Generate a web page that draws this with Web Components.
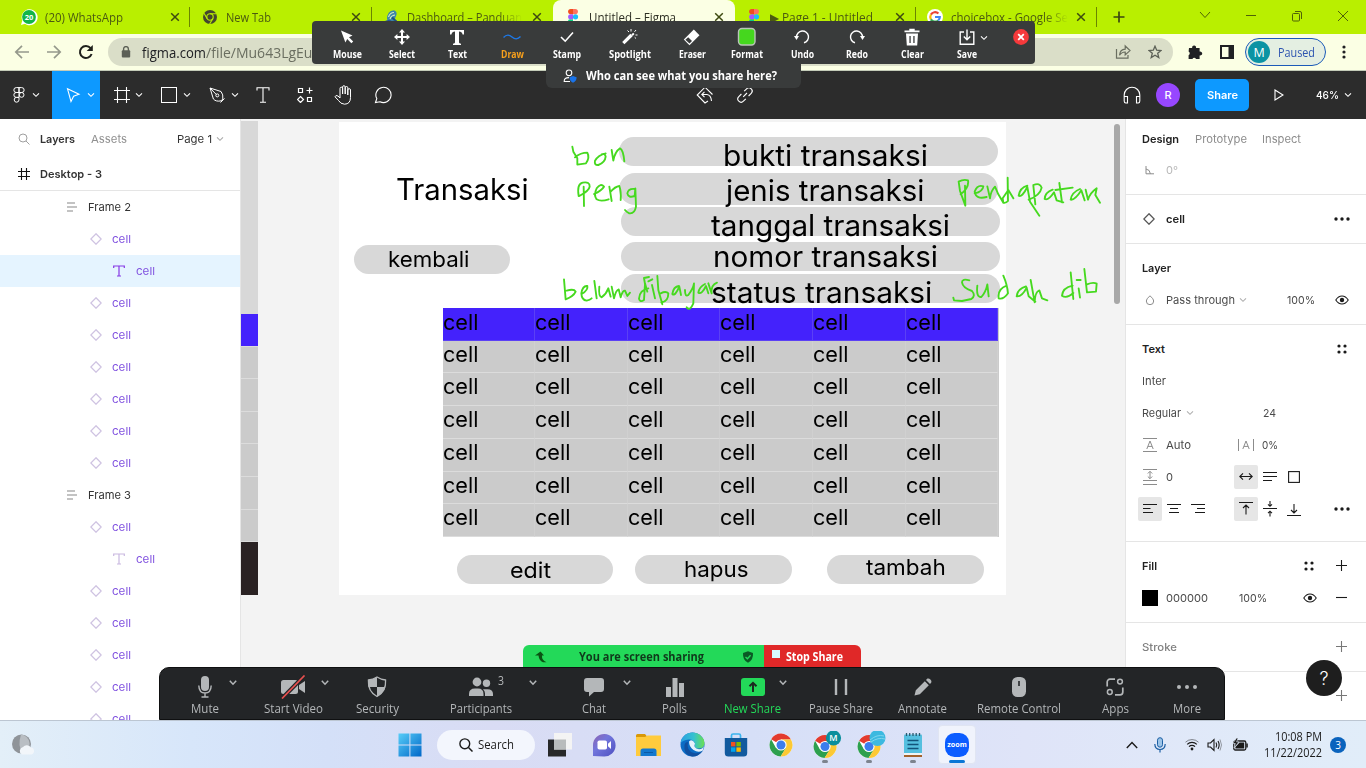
<!DOCTYPE html>
<html lang="en"><head><meta charset="utf-8"><title>Untitled – Figma</title>
<style>html,body{margin:0;width:1366px;height:768px;overflow:hidden;background:#fff}</style></head>
<body><desktop-screen></desktop-screen>
<script>
// ---------- icon set: name -> [width, height, markup] ----------
const L='fill="none" stroke="currentColor"';
const chrome=`<circle cx="12" cy="12" r="11.5" fill="#fff"/><path d="M12 12 2.1 6.2A11.5 11.5 0 0 1 22 6.4H12Z" fill="#e33b2e"/><path d="M2.1 6.2A11.5 11.5 0 0 0 11.6 23.5L17 15 12 12 7 15Z" fill="#2da04e"/><path d="M22 6.4A11.5 11.5 0 0 1 11.6 23.5L17 14.8 12 6.4Z" fill="#fcc934"/><circle cx="12" cy="12" r="5.6" fill="#fff"/><circle cx="12" cy="12" r="4.5" fill="#3b7ded"/>`;
const ICONS={
 wa:[18,18,'<path d="M1 17l1.3-4.5A8 8 0 1 1 5 15.8Z" fill="#fff"/><circle cx="9" cy="9" r="6.9" fill="#12b548"/><text x="9" y="11.7" font-size="7.5" font-weight="700" fill="#fff" text-anchor="middle" font-family="Open Sans,sans-serif">20</text>'],
 chromeg:[14,14,'<circle cx="7" cy="7" r="7" fill="#44452f"/><circle cx="7" cy="7" r="3.2" fill="none" stroke="#b9ef00" stroke-width="1.1"/><path d="M7 3.8H13.5M4.2 8.6 1 3.2M9.8 8.6 6.6 14" stroke="#b9ef00" stroke-width="1.1"/>'],
 book:[14,16,'<path d="M3 10Q3 2 10 1.2 14 3 12 7L10 12H4Z" fill="#3c86a8"/><path d="M4.5 8Q6 3.5 10 3.5M6 10Q7 6.5 11 6" stroke="#d4ecc0" stroke-width="1.2" fill="none"/><path d="M8 8.5 12.5 12.5" stroke="#1f4f86" stroke-width="1.8"/><path d="M1 12Q6 10 8 12.5 10 11 13.5 12.5V15Q9 14 7.5 15 5 13.8 1 14.5Z" fill="#24549a"/>'],
 fig:[12,16,'<g transform="translate(1)"><path d="M5 0H2.7a2.6 2.6 0 0 0 0 5.2H5Z" fill="#f24e1e"/><path d="M5 0h2.3a2.6 2.6 0 0 1 0 5.2H5Z" fill="#ff7262"/><path d="M5 5.2H2.7a2.6 2.6 0 0 0 0 5.2H5Z" fill="#a259ff"/><circle cx="7.5" cy="7.8" r="2.6" fill="#1abcfe"/><path d="M5 10.4H2.7A2.6 2.6 0 1 0 5 13Z" fill="#0acf83"/></g>'],
 goog:[16,16,'<circle cx="8" cy="8" r="8" fill="#fff"/><g fill="none" stroke-width="2.2"><path d="M3.9 5.6A4.8 4.8 0 0 1 11.4 4.5" stroke="#ea4335"/><path d="M3.9 5.6A4.8 4.8 0 0 0 3.9 10.4" stroke="#fbbc05"/><path d="M3.9 10.4A4.8 4.8 0 0 0 11.2 11.5" stroke="#34a853"/><path d="M8 8H12.8A4.8 4.8 0 0 1 11.2 11.5" stroke="#4285f4"/></g>'],
 x:[10,10,`<path d="M1.2 1.2 8.8 8.8M8.8 1.2 1.2 8.8" ${L} stroke-width="1.5"/>`],
 plus:[12,12,`<path d="M6 .5V11.5M.5 6H11.5" ${L} stroke-width="1.7"/>`],
 wchev:[12,12,`<path d="M1 1 6 6.5 11 1" ${L}/>`], wmin:[12,12,`<path d="M1 4.5H11" ${L}/>`],
 wmax:[12,12,`<rect x="1.5" y="2.5" width="7" height="7.5" rx="1" ${L}/><path d="M4 .5H9A1.5 1.5 0 0 1 10.5 2V8" ${L}/>`],
 wx:[12,12,`<path d="M1 0 11 10M11 0 1 10" ${L}/>`],
 back:[16,16,`<path d="M15 8H2M8 1.8 1.8 8 8 14.2" ${L} stroke-width="1.7"/>`],
 fwd:[16,16,`<path d="M1 8H14M8 1.8 14.2 8 8 14.2" ${L} stroke-width="1.7"/>`],
 reload:[16,16,`<path d="M13.6 10A6 6 0 1 1 12.6 4.2" ${L} stroke-width="2"/><path d="M14.8.9V7H8.7Z" fill="currentColor"/>`],
 lock:[10,12,`<rect x=".8" y="4.3" width="8.4" height="7.2" rx="1" fill="currentColor"/><path d="M2.6 5V3A2.4 2.4 0 0 1 7.4 3V5" ${L} stroke-width="1.4"/>`],
 share:[16,16,`<path d="M1.5 5V14.2H13V11" ${L} stroke-width="1.2"/><path d="M4.5 11.3Q5 5.4 10.2 5.2V2L15 6.6 10.2 11V8Q6.5 8 4.5 11.3Z" ${L} stroke-width="1.2"/>`],
 star:[14,14,`<path d="M7 1.2 8.7 5.2 13 5.5 9.7 8.3 10.8 12.6 7 10.3 3.2 12.6 4.3 8.3 1 5.5 5.3 5.2Z" ${L} stroke-width="1.3"/>`],
 puzzle:[16,16,'<path d="M2 4H5.2A2 2 0 1 1 9 4H12.6V7.6A2 2 0 1 1 12.6 11.4V15H9A2 2 0 0 0 5.4 15H1.6V11.2A2 2 0 0 0 1.6 7.6Z" fill="currentColor"/>'],
 side:[14,14,'<path d="M0 0H14V14H0ZM2 2V12H8.5V2Z" fill="currentColor" fill-rule="evenodd"/>'],
 vdots:[4,14,'<g fill="currentColor"><circle cx="2" cy="2" r="1.6"/><circle cx="2" cy="7" r="1.6"/><circle cx="2" cy="12" r="1.6"/></g>'],
 // Figma toolbar
 chev:[8,6,`<path d="M1 1.3 4 4.3 7 1.3" ${L} stroke-width="1.1"/>`],
 flogo:[12,16,`<path d="M6 .6H3.3a2.4 2.4 0 0 0 0 4.9H6ZM6 .6H8.7a2.4 2.4 0 0 1 0 4.9H6ZM6 5.5H3.3a2.4 2.4 0 0 0 0 4.9H6Z M6 10.4H3.3A2.4 2.4 0 1 0 6 12.8Z" ${L}/><circle cx="8.6" cy="7.9" r="2.4" ${L}/>`],
 move:[16,16,`<path d="M2.5 1.8 14 7.2 8.6 9.2 6 14.5Z" ${L} stroke-width="1.1"/>`],
 frame:[16,16,`<path d="M3.5 0V16M12.5 0V16M0 3.5H16M0 12.5H16" ${L} stroke-width="1.1"/>`],
 rect:[16,16,`<rect x=".5" y=".5" width="15" height="15" ${L}/>`],
 pen:[16,16,`<path d="M1 1 12 4.5Q14.5 7.5 13.8 12L12.2 13.8Q7 15 4.4 12ZM1 1 7.4 7.6M11.5 15.5 15.5 11.5" ${L}/><circle cx="8.3" cy="8.4" r="1.5" ${L}/>`],
 text:[14,16,`<path d="M1 3.5V.7H13V3.5M7 .7V15.3M4 15.3H10" ${L} stroke-width="1.1"/>`],
 res:[16,16,`<path d="M1.5 1.5h4v4h-4ZM10.5 10.5h4v4h-4ZM3.5 9.5 6.5 12.5 3.5 15.5.5 12.5ZM12.5.5V6.5M9.5 3.5H15.5" ${L} stroke-width="1.2"/>`],
 hand:[18,20,`<path d="M6 12V3.5a1.2 1.2 0 0 1 2.6 0V9 2a1.2 1.2 0 0 1 2.6 0V9 2.8a1.2 1.2 0 0 1 2.6 0V10 5a1.2 1.2 0 0 1 2.7 0V12.5Q16.5 19 10.5 19.2 6.5 19 4.5 15.5L1 11.8Q1.5 9.6 4 11L6 13Z" ${L}/>`],
 comment:[18,18,`<path d="M1.5 16.5 2.8 12.6A7.6 7.6 0 1 1 6 15.7Z" ${L} stroke-width="1.1"/>`],
 comp:[18,18,`<path d="M12 15 9 17 1.2 9 9 1.2 16.5 8.5M6 8.5H11Q15 9 15.5 15M8.5 5.8 5.8 8.5 8.5 11.2" ${L} stroke-width="1.1"/>`],
 link:[16,16,`<path d="M6.2 9.8 10 6M7.2 4.2 9.6 1.8A3.2 3.2 0 0 1 14.2 6.4L11.6 9M8.8 11.8 6.4 14.2A3.2 3.2 0 0 1 1.8 9.6L4.4 7" ${L} stroke-width="1.1"/>`],
 phones:[18,18,`<path d="M1.2 14V9A7.8 7.8 0 0 1 16.8 9V14M1.2 10.5H4.5V17H2.8Q1.2 17 1.2 15ZM16.8 10.5H13.5V17H15.2Q16.8 17 16.8 15Z" ${L} stroke-width="1.1"/>`],
 play:[10,12,`<path d="M1 1 9 6 1 11Z" ${L} stroke-width="1.1"/>`],
 // panels
 search:[12,12,`<circle cx="5" cy="5" r="4" ${L}/><path d="M8 8 11.5 11.5" ${L}/>`],
 hash:[12,12,`<path d="M3.5 0V12M8.5 0V12M0 3.5H12M0 8.5H12" ${L} stroke-width="1.1"/>`],
 auto:[10,10,`<path d="M0 1H8M0 5H10M0 9H6" ${L} stroke-width="1.7"/>`],
 dia:[12,12,`<path d="M6 .8 11.2 6 6 11.2.8 6Z" ${L} stroke-width="1.3"/>`],
 tt:[12,12,`<path d="M.7 3V1H11.3V3M6 1V11M4 11H8" ${L} stroke-width="1.2"/>`],
 angle:[10,10,`<path d="M1 1V8.8H9M1 4Q5 4.5 5.4 8.8" ${L}/>`],
 dots:[16,4,'<g fill="currentColor"><circle cx="2" cy="2" r="1.7"/><circle cx="8" cy="2" r="1.7"/><circle cx="14" cy="2" r="1.7"/></g>'],
 drop:[10,10,`<path d="M5 .8Q8.7 3.7 8.7 6A3.6 3.6 0 0 1 1.3 6Q1.3 3.7 5 .8Z" ${L}/>`],
 eye:[14,10,`<path d="M.8 5Q3.3 1 7 1 10.7 1 13.2 5 10.7 9 7 9 3.3 9 .8 5Z" ${L} stroke-width="1.1"/><circle cx="7" cy="5" r="2.2" fill="currentColor"/>`],
 four:[10,10,'<g fill="currentColor"><circle cx="2" cy="2" r="1.6"/><circle cx="8" cy="2" r="1.6"/><circle cx="2" cy="8" r="1.6"/><circle cx="8" cy="8" r="1.6"/></g>'],
 add:[12,12,`<path d="M5.5 0V11M0 5.5H11" ${L} stroke-width="1.1"/>`], minus:[12,12,`<path d="M0 5.5H11" ${L} stroke-width="1.1"/>`],
 lh:[14,14,`<path d="M0 .5H14M0 13.5H14M3.8 11 7 3 10.2 11M5 8.4H9" ${L}/>`],
 ls:[16,14,`<path d="M.5 1V13M15.5 1V13M4.8 11 8 3 11.2 11M6 8.4H10" ${L}/>`],
 ps:[14,16,`<path d="M0 .5H14M0 11.5H14M0 15.5H14M7 2.5V9.5M4.8 4.5 7 2.3 9.2 4.5M4.8 7.5 7 9.7 9.2 7.5" ${L}/>`],
 aw:[14,10,`<path d="M1 4.5H13M4 1.3.8 4.5 4 7.7M10 1.3 13.2 4.5 10 7.7" ${L} stroke-width="1.1"/>`],
 ah:[14,10,`<path d="M0 .5H14M0 4.5H14M0 8.5H9" ${L} stroke-width="1.1"/>`],
 fs:[12,12,`<rect x=".6" y=".6" width="10.8" height="10.8" ${L} stroke-width="1.1"/>`],
 al:[14,10,`<path d="M0 .5H14M0 4.5H7.5M0 8.5H10" ${L} stroke-width="1.1"/>`],
 ac:[14,10,`<path d="M0 .5H14M3 4.5H11M2 8.5H12" ${L} stroke-width="1.1"/>`],
 ar:[14,10,`<path d="M0 .5H14M6 4.5H14M4 8.5H14" ${L} stroke-width="1.1"/>`],
 vt:[14,14,`<path d="M0 .5H14M7 3V12.5M4 6 7 3 10 6" ${L} stroke-width="1.1"/>`],
 vm:[14,16,`<path d="M0 7.5H14M7 0V5M5 3.3 7 5.3 9 3.3M7 15.5V11M5 12.2 7 10.2 9 12.2" ${L} stroke-width="1.1"/>`],
 vb:[14,14,`<path d="M0 13.5H14M7 2V11M4 8 7 11 10 8" ${L} stroke-width="1.1"/>`],
 // annotation bar
 mouse:[14,14,'<path d="M1 .5 12.5 5.6 9 7.2 13.2 11.4 11.4 13.2 7.2 9 5.4 12.4Z" fill="currentColor"/>'],
 select:[16,16,'<path d="M8 0 11 3.4H9V7H12.6V5L16 8 12.6 11V9H9V12.6H11L8 16 5 12.6H7V9H3.4V11L0 8 3.4 5V7H7V3.4H5Z" fill="currentColor"/>'],
 bigt:[14,15,'<path d="M0 0H14V4.5H12.6Q12 1.6 9 1.6V12.5Q9 13.6 11 13.8V15H3V13.8Q5 13.6 5 12.5V1.6Q2 1.6 1.4 4.5H0Z" fill="currentColor"/>'],
 draw:[18,8,'<path d="M.5 4.5Q4.5 0 9 4T17.5 3.5" fill="none" stroke="#1e78e6" stroke-width="1.4"/>'],
 stamp:[14,12,`<path d="M1 6 5.2 10.2 13 1.5" ${L} stroke-width="1.6"/>`],
 spot:[16,16,`<path d="M1.3 14.2 9.5 6" ${L} stroke-width="3.2"/><path d="M10.2 4.6 11.6 6" ${L} stroke-width="2.6"/><path d="M9 0V2.5M14 1 12.5 2.8M13.5 6H15.5M5.5 1.5 7 3M14 9.5 12.7 8.3" ${L}/>`],
 eraser:[18,18,'<path d="M.8 11.5 10.8 1.5 16.5 7.2 6.5 17.2Z" fill="currentColor"/><path d="M5.2 9.3 9 13.1 6.5 15.6 2.4 11.8Z" fill="#393b3b"/>'],
 format:[20,20,'<rect x="1.5" y="1.5" width="16.5" height="16.5" rx="3.5" fill="#45d71e" stroke="#b9c4b8" stroke-width="1.4"/>'],
 undo:[16,16,`<path d="M2.5 8A6 6 0 1 1 10 13.8" ${L} stroke-width="1.4"/><path d="M0 7H5L2.5 11Z" fill="currentColor"/>`],
 redo:[16,16,`<path d="M13.5 8A6 6 0 1 0 6 13.8" ${L} stroke-width="1.4"/><path d="M11 7H16L13.5 11Z" fill="currentColor"/>`],
 clear:[16,18,'<path d="M.5 2.5H5.3V.8H10.7V2.5H15.5V4.2H.5ZM2 5.5H14L13.2 17.5H2.8ZM5.4 8V15H6.7V8ZM9.3 8V15H10.6V8Z" fill="currentColor" fill-rule="evenodd"/>'],
 save:[16,16,`<path d="M5 3H1.2V15.2H14.8V3H11M8 .5V10.5M4.8 7.5 8 10.7 11.2 7.5" ${L} stroke-width="1.4"/>`],
 closer:[16,16,'<circle cx="8" cy="8" r="7.9" fill="#f5393b"/><path d="M5.2 5.2 10.8 10.8M10.8 5.2 5.2 10.8" stroke="#fff" stroke-width="1.8"/>'],
 who:[14,14,`<circle cx="6" cy="3.8" r="2.8" ${L} stroke-width="1.1"/><path d="M7 12.5H1.2Q1 8.5 6 8.6" ${L} stroke-width="1.1"/><path d="M10 7 13.6 8.2Q13.8 12 10 13.8 6.4 12 6.6 8.2Z" fill="#1a73e8"/>`],
 // meeting bar
 mic:[14,22,`<rect x="3" y="0" width="8" height="15" rx="4" fill="currentColor"/><path d="M.8 9.5Q1 17 7 17 13 17 13.2 9.5M7 17V21M3.5 21H10.5" ${L} stroke-width="1.4"/>`],
 video:[26,24,'<rect x="1" y="5" width="17" height="14" rx="2.5" fill="currentColor"/><path d="M19 10 25 6V18L19 14Z" fill="currentColor"/><path d="M2 23.5 24.5.5" stroke="#232527" stroke-width="4"/><path d="M2 23.5 24.5.5" stroke="#e8504f" stroke-width="1.7"/>'],
 sec:[20,22,`<path d="M10 1Q14 3.6 18.6 4 19.3 15.5 10 20.5.7 15.5 1.4 4 6 3.6 10 1Z" ${L} stroke-width="1.3"/><path d="M10 1V11H1.6Q1 8 1.4 4 6 3.6 10 1ZM10 11H18.3Q17.3 16.8 10 20.5Z" fill="currentColor"/>`],
 people:[26,20,'<g fill="currentColor"><circle cx="9" cy="5" r="4.4"/><circle cx="18.5" cy="6.2" r="3.7"/><path d="M1 19V17Q1 11.5 7 11.5H10Q15.5 11.5 15.5 17V19ZM17 19V16.5Q17 14 15 12.2H19.5Q25 12.2 25 17V19Z"/></g>'],
 chat:[20,20,'<path d="M3 1H17A3 3 0 0 1 20 4V12A3 3 0 0 1 17 15H10L5 19.5V15H3A3 3 0 0 1 0 12V4A3 3 0 0 1 3 1Z" fill="currentColor"/>'],
 polls:[18,19,'<path d="M0 9h5v10H0ZM6.5 0h5v19h-5ZM13 5h5v14h-5Z" fill="currentColor"/>'],
 newshare:[24,18,'<rect width="24" height="18" rx="3" fill="#23d959"/><path d="M12 14V5M8.5 8.3 12 4.8 15.5 8.3" fill="none" stroke="#1c2a20" stroke-width="2"/>'],
 pause:[14,16,`<path d="M2 0V16M12 0V16" ${L} stroke-width="2.4"/>`],
 pencil:[18,18,'<path d="M.5 17.5 1.8 12.2 10.8 3.2 14.8 7.2 5.8 16.2ZM12 2 13.4.6Q15 0 16.4 1.6 18 3 17.3 4.6L16 6Z" fill="currentColor"/>'],
 remote:[14,20,'<rect width="14" height="20" rx="5.5" fill="currentColor"/><path d="M7 4V9" stroke="#232527" stroke-width="1.6"/>'],
 apps:[18,18,`<path d="M9 1.2H4A2.8 2.8 0 0 0 1.2 4V8.5M16.8 9.5V14A2.8 2.8 0 0 1 14 16.8H9" ${L} stroke-width="1.7"/><circle cx="14" cy="3.6" r="2.4" ${L} stroke-width="1.5"/><circle cx="3.8" cy="14" r="2.4" ${L} stroke-width="1.5"/>`],
 more:[22,6,'<g fill="currentColor"><circle cx="3" cy="3" r="2"/><circle cx="11" cy="3" r="2"/><circle cx="19" cy="3" r="2"/></g>'],
 zchev:[8,6,`<path d="M.8.8 4 4.2 7.2.8" ${L} stroke-width="1.5"/>`],
 green:[12,12,'<path d="M5.5.5 0 4.5H3.5Q4 9.5 8 11.2H11.5Q6.5 9 7 4.5H9Z" fill="#0a5313"/>'],
 shield:[12,12,'<path d="M6 .3 11 2Q11.5 9 6 11.8.5 9 1 2Z" fill="#0a5a25"/><path d="M3.5 6 5.4 7.8 8.6 4.2" fill="none" stroke="#23d959" stroke-width="1.3"/>'],
 // taskbar
 win:[24,24,'<defs><linearGradient id="w" x1="0" y1="0" x2="1" y2="1"><stop stop-color="#57cdf8"/><stop offset="1" stop-color="#0067c8"/></linearGradient></defs><path d="M.5.5H11.4V11.4H.5ZM12.4.5H23.5V11.4H12.4ZM.5 12.4H11.4V23.5H.5ZM12.4 12.4H23.5V23.5H12.4Z" fill="url(#w)"/>'],
 tsearch:[14,14,`<circle cx="5.8" cy="5.8" r="4.9" ${L} stroke-width="1.4"/><path d="M9.5 9.5 13.5 13.5" ${L} stroke-width="1.5"/>`],
 task:[24,24,'<rect x="0" y="6.5" width="18" height="17" fill="#272829"/><rect x="6" y="0" width="18" height="16.5" fill="#f4f4f4" /><rect x="6" y="6.5" width="12" height="10" fill="#b9bcbc"/>'],
 teams:[24,24,'<defs><linearGradient id="t" x1="0" y1="0" x2="1" y2="1"><stop stop-color="#8e63b0"/><stop offset=".4" stop-color="#7276dc"/><stop offset="1" stop-color="#4d4fc0"/></linearGradient></defs><path d="M1 23V12A11.3 11.3 0 1 1 12 23.5Z" fill="url(#t)"/><rect x="5.5" y="7.5" width="9.5" height="9" rx="1.8" fill="#fff"/><path d="M16 10.7 19 8V16L16 13.3Z" fill="#fff"/>'],
 folder:[25,24,'<path d="M0 2.5A1.5 1.5 0 0 1 1.5 1H9L11.5 4H0Z" fill="#d99808"/><path d="M0 4H9L11.5 2.5H25V23H0Z" fill="#ffcb3d"/><path d="M4.5 23V18A2.5 2.5 0 0 1 7 15.5H18A2.5 2.5 0 0 1 20.5 18V23Z" fill="#1278cf"/><path d="M8 19.5H17" stroke="#0a5aa5"/>'],
 edge:[25,25,'<defs><linearGradient id="e"><stop stop-color="#2a9fe2"/><stop offset=".55" stop-color="#35c1d0"/><stop offset="1" stop-color="#6be04f"/></linearGradient></defs><circle cx="12.5" cy="12.5" r="12" fill="#0c6cc5"/><path d="M.6 11Q2 1 12.5.5 23 1 24.5 11 24.5 16.5 18 16.5 13.5 16 15 12.5 14 7 8.5 7.5 3 8 .6 11Z" fill="url(#e)"/><path d="M8 10Q6 19 14 21 18 22 22.5 18.7 18 25 12 24.4 3 23 4.5 13 5 10 8 10Z" fill="#1150a0"/><path d="M9 9.5Q12 6 15 11.5 13 16 19 17.2 23 17 24 13.5 23.5 17 22.5 18.7 18 21 13.5 18 9 15 9 9.5Z" fill="#e5f1fb"/>'],
 store:[24,24,'<path d="M7.5 5V2.5A1.5 1.5 0 0 1 9 1H15A1.5 1.5 0 0 1 16.5 2.5V5" fill="none" stroke="#3ab4ee" stroke-width="1.7"/><path d="M.8 5H23.2V20A3.5 3.5 0 0 1 19.7 23.5H4.3A3.5 3.5 0 0 1 .8 20Z" fill="#125a9e"/><path d="M7 9h4.4v4.4H7Z" fill="#f25022"/><path d="M12.4 9h4.4v4.4h-4.4Z" fill="#7fba00"/><path d="M7 14.4h4.4v4.4H7Z" fill="#00a4ef"/><path d="M12.4 14.4h4.4v4.4h-4.4Z" fill="#ffb900"/>'],
 chrome:[24,24,chrome],
 chromem:[34,28,`<g transform="translate(5,3.5)">${chrome}</g><circle cx="25.5" cy="7" r="7.6" fill="#0b8f9c"/><text x="25.5" y="10.3" font-family="Open Sans,sans-serif" font-size="9" font-weight="600" fill="#fff" text-anchor="middle">M</text>`],
 chromes:[34,28,`<g transform="translate(5,3.5)">${chrome}</g><circle cx="25.5" cy="7" r="8" fill="#3cb9e0"/><path d="M18 9Q25 3 32 5M19 11Q26 6 33 8" stroke="#7fd6ee" fill="none"/>`],
 note:[20,26,'<rect x="1" y="2.5" width="18" height="20" rx="1" fill="#55bfdf"/><path d="M1 22H19V25H1Z" fill="#a4622c"/><path d="M1 21H19V23H1Z" fill="#f0f4f5"/><path d="M4.5 8.5H15.5M4.5 12.5H15.5M4.5 16.5H15.5" stroke="#12537a" stroke-width="1.6"/><path d="M3.5 1V4M6.7 1V4M10 1V4M13.2 1V4M16.5 1V4" stroke="#2a5a70" stroke-width="1.3"/>'],
 zoom:[24,24,'<rect width="24" height="24" rx="9.5" fill="#0b5cff"/><text x="12" y="14.3" font-family="Open Sans,sans-serif" font-size="7.2" font-weight="700" fill="#fff" text-anchor="middle">zoom</text>'],
 weather:[24,24,'<circle cx="10.5" cy="11" r="9.5" fill="#8f9499"/><path d="M10 1.5A9.5 9.5 0 0 1 12 20Q6 14 10 1.5Z" fill="#b9bec3"/><path d="M11 21.5A4 4 0 0 1 12 14 5 5 0 0 1 20 14.5 3.6 3.6 0 0 1 20.5 21.5Z" fill="#f2f6fa"/>'],
 up:[12,8,`<path d="M.8 7 6 1.5 11.2 7" ${L} stroke-width="1.4"/>`],
 tmic:[12,16,'<rect x="3.5" y=".7" width="5" height="9.5" rx="2.5" fill="#9cc4e8" stroke="#1a5ea3"/><path d="M.8 7Q1 12.5 6 12.5 11 12.5 11.2 7M6 12.5V15.5" fill="none" stroke="#1a5ea3" stroke-width="1.2"/>'],
 wifi:[14,12,`<circle cx="7" cy="10" r="1.4" fill="currentColor"/><path d="M4 7.6A4.2 4.2 0 0 1 10 7.6M2.2 5.4A6.8 6.8 0 0 1 11.8 5.4" ${L} stroke-width="1.2"/><path d="M.5 3.2A9.4 9.4 0 0 1 13.5 3.2" ${L} opacity=".5"/>`],
 spk:[16,14,`<path d="M1 5H3.5L7 1.5V12.5L3.5 9H1Z" ${L} stroke-width="1.1"/><path d="M9 4.5Q10.5 7 9 9.5M11 3Q13.3 7 11 11" ${L} stroke-width="1.1"/><path d="M13 1.5Q16 7 13 12.5" ${L} opacity=".4"/>`],
 bat:[16,14,'<rect x="1.8" y="3" width="12" height="9" rx="1.5" fill="none" stroke="currentColor" stroke-width="1.3"/><path d="M7.5 4.6H12.2V10.4H3.4V9Z M14.3 5.5H15.8V9.5H14.3Z" fill="currentColor"/><path d="M4.5 0 .8 5.5H3.3L2 10 7 4H4.6L6 0Z" fill="currentColor" stroke="#e0ebf8" stroke-width=".6"/>'],
};
const pending=[];
const define=(name,css,html)=>customElements.define(name,class extends HTMLElement{
  connectedCallback(){ if(this.shadowRoot) return;
    this.attachShadow({mode:'open'}).innerHTML=`<style>*{box-sizing:border-box}.s{display:flex;height:100%;align-items:center}.s>div{flex:none;display:flex;align-items:center;white-space:nowrap}.s>.c{justify-content:center}${css}</style>`+(typeof html==='function'?html(this):html); }
});
// Icon: box has the size of its drawing.
define('ui-icon',':host{display:inline-flex;flex:none}svg{display:block}',el=>{
  const [w,h,m]=ICONS[el.getAttribute('n')];return `<svg width="${w}" height="${h}" viewBox="0 0 ${w} ${h}">${m}</svg>`});
// Text set to a fixed measure (attribute w).
customElements.define('fit-text',class extends HTMLElement{
  connectedCallback(){ if(this.shadowRoot) return;
    this.attachShadow({mode:'open'}).innerHTML='<style>:host{display:inline-block;white-space:pre;flex:none}span{display:inline-block;transform-origin:0 50%}</style><span><slot></slot></span>';
    pending.push(this); }
  fit(){ const s=this.shadowRoot.querySelector('span'),w=+this.getAttribute('w'),n=s.getBoundingClientRect().width;
    if(w&&n){ this._k=w/n; this._w=w; } }
  apply(){ if(this._k){ this.style.width=this._w+'px'; this.shadowRoot.querySelector('span').style.transform=`scaleX(${this._k})`; } }
});
const ic=(n,color)=>`<ui-icon n="${n}"${color?` style="color:${color}"`:''}></ui-icon>`;
const tx=(w,t,st)=>`<fit-text w="${w}"${st?` style="${st}"`:''}>${t}</fit-text>`;
// Row of items [left, width, content, class]; gaps become margins between flex items.
const strip=(start,items)=>{let p=start;return '<div class="s">'+items.map(([x,w,h,c=''])=>{const m=x-p;p=x+w;return `<div class="${c}" style="margin-left:${m}px;width:${w}px">${h}</div>`}).join('')+'</div>'};
// Centered icon item.
const ci=(cx,n,color)=>{const w=ICONS[n][0];return [Math.floor(cx-w/2),w,ic(n,color)]};

// ---------- browser ----------
define('browser-tab',`:host{display:block;flex:none;width:181.4px;height:34px;font:12px "Open Sans",sans-serif;color:#4b5a10;position:relative}
 :host([on]){background:#fbffe4;border-radius:8px 8px 0 0;color:#2c2e22}:host([sep]){border-right:1px solid #6b8500;height:20px;margin-top:7px}:host([sep]) .s{height:20px}
 .x{color:#3d4a10}`,el=>{const g=a=>el.getAttribute(a);const iw=ICONS[g('icon')][0];
 return strip(0,[[19-iw/2+.5,iw,ic(g('icon'))],[35.5,+g('w'),tx(g('w'),g('label'),g('fade')!==null?'-webkit-mask:linear-gradient(90deg,#000 80%,transparent)':'')],[160.5,10,ic('x'),'x']])});
define('browser-tabs',':host{display:flex;height:34px;background:#b9ef00;padding-left:9px;flex:none}.w{flex:none;width:268px;height:33px;color:#4f6207}.w .s>div:first-child{color:#3a4510}',
 `<browser-tab sep icon="wa" w="78" label="(20) WhatsApp"></browser-tab><browser-tab sep icon="chromeg" w="45" label="New Tab"></browser-tab><browser-tab icon="book" w="115" fade label="Dashboard – Panduan"></browser-tab><browser-tab on icon="fig" w="87" label="Untitled – Figma"></browser-tab><browser-tab sep icon="fig" w="103" label="▶ Page 1 - Untitled"></browser-tab><browser-tab sep icon="goog" w="117" fade label="choicebox - Google Se"></browser-tab>
 <div class="w">${strip(1097.4,[ci(1119,'plus'),ci(1205,'wchev'),ci(1251,'wmin'),ci(1297,'wmax'),ci(1343,'wx')])}</div>`);
define('browser-bar',`:host{display:block;height:37px;background:#fbffe4;border-bottom:1px solid #c3cbb8;box-sizing:border-box;flex:none;font:14px "Open Sans",sans-serif;color:#202124}
 .omni{height:28px;border-radius:14px;background:#dadec8}.g{color:#6a6e60}
 .pill{height:28px;border:1px solid #1a5ab8;border-radius:14px;background:#e4efe2;font-size:12.5px;color:#2c54b0;gap:8px;padding-left:2px}.m{width:22px;height:22px;border-radius:50%;background:#0b93a3;color:#fff;display:flex;align-items:center;justify-content:center}`,
 strip(0,[ci(22,'back','#95998c'),ci(54,'fwd','#95998c'),ci(86,'reload','#1f211c'),[108,1065,strip(108,[ci(126,'lock','#5c6056'),[142,64,tx(64,'figma.com')],[206,110,tx(110,'/file/Mu643LgEul'),'g'],ci(1123,'share','#6a6e60'),ci(1155,'star','#5c6056')]),'omni'],ci(1195,'puzzle'),ci(1227,'side'),[1245,81,`<span class="m">M</span>${tx(37,'Paused')}`,'pill'],ci(1344.5,'vdots')]));

// ---------- Figma chrome ----------
define('figma-toolbar',`:host{display:block;height:48px;background:#2c2c2c;flex:none;color:#fff;font:500 11px Inter,sans-serif}.mv{background:#0d99ff;height:48px}.av{height:24px;border-radius:50%;background:#9747ff}.sh{height:32px;border-radius:5px;background:#0d99ff;font-weight:600}`,
 strip(0,[ci(19.5,'flogo'),ci(36,'chev'),[52,48,strip(52,[ci(73,'move'),ci(91,'chev')]),'mv'],ci(122,'frame'),ci(139,'chev'),ci(169,'rect'),ci(187,'chev'),ci(217,'pen'),ci(235,'chev'),ci(263.5,'text'),ci(305,'res'),ci(343,'hand'),ci(383,'comment'),ci(705,'comp'),ci(745,'link'),ci(1132,'phones'),[1156,24,'R','c av'],[1195,54,tx(31,'Share'),'c sh'],ci(1279,'play'),[1316,23,tx(23,'46%')],ci(1348,'chev')]));
define('layer-row',`:host{display:block;height:32px;flex:none;font:11px Inter,sans-serif;color:#8254e0}:host([sel]){background:#e5f4ff}`,el=>{
 const k=el.getAttribute('kind'),t=el.getAttribute('label');
 return k==='frame'?strip(0,[ci(72,'auto','#b0b0b0'),[88,43,tx(43,t,'color:#333')]]):k==='text'?strip(0,[ci(119.5,'tt',el.hasAttribute('sel')?'#8638e5':'#c9b8e0'),[136,19,tx(19,t)]]):strip(0,[ci(96,'dia','#cfc3e2'),[112,19,tx(19,t)]])});
const row=(k,l,s='')=>`<layer-row kind="${k}" label="${l}" ${s}></layer-row>`;
define('layers-panel',`:host{display:block;box-sizing:border-box;width:241px;background:#fff;border-right:1px solid #e5e5e5;overflow:hidden;flex:none;font:600 11px Inter,sans-serif;color:#333}.h{height:40px}.d{height:32px;border-bottom:1px solid #e5e5e5;padding-bottom:2px}`,
 `<div class="h">${strip(0,[ci(24,'search','#a0a0a0'),[40,35,tx(35,'Layers')],[91,36,tx(36,'Assets','color:#909090;font-weight:400')],[177,35,tx(35,'Page 1','font-weight:400')],ci(220,'chev','#aaa')])}</div><div class="d">${strip(0,[ci(24,'hash','#111'),[40,62,tx(62,'Desktop - 3')]])}</div>`
 +row('frame','Frame 2')+row('cell','cell')+row('text','cell','sel')+row('cell','cell').repeat(6)+row('frame','Frame 3')+row('cell','cell')+row('text','cell')+row('cell','cell').repeat(5));
define('design-panel',`:host{display:block;box-sizing:border-box;width:241px;background:#fff;border-left:1px solid #e5e5e5;flex:none;overflow:hidden;font:11px Inter,sans-serif;color:#4a4a4a}
 section{border-bottom:1px solid #e5e5e5;padding:8px 0}.r{height:32px}b{font-weight:600;color:#222}.on{background:#e6e6e6;height:24px;border-radius:2px}.i{color:#222}.sw{background:#000;height:16px}`,()=>{
 const r=(...a)=>`<div class="r">${strip(1126,a)}</div>`, b=(w,t)=>[1142,w,`<b>${tx(w,t)}</b>`], t=(x,w,s,st)=>[x,w,tx(w,s,st)], K='#1a1a1a',G='#8c8c8c';
 const on=(x,n)=>[x,24,ic(n,K),'c on'];
 return `<section style="padding:4px 0 9px">${r(b(37,'Design'),t(1194.5,52,'Prototype','color:#8c8c8c'),t(1262,39,'Inspect','color:#8c8c8c'))}<div style="height:30px">${strip(1126,[ci(1150,'angle',G),t(1166,12,'0°','color:#b8b8b8')])}</div></section>
 <section>${r(ci(1149,'dia','#555'),[1166,19,`<b>${tx(19,'cell')}</b>`],ci(1342,'dots',K))}</section>
 <section>${r(b(29,'Layer'))}${r(ci(1150,'drop',G),t(1166,69,'Pass through'),ci(1243,'chev','#b0b0b0'),t(1287,28,'100%'),ci(1342,'eye',K))}</section>
 <section style="padding-bottom:16px">${r(b(23,'Text'),ci(1342,'four',K))}${r(t(1142,24,'Inter'))}${r(t(1142,39,'Regular'),ci(1190,'chev','#b0b0b0'),t(1263,13,'24'))}${r(ci(1150,'lh',G),t(1166,25,'Auto'),ci(1246,'ls',G),t(1262,16,'0%'))}${r(ci(1150,'ps',G),t(1166,7,'0'),on(1234,'aw'),ci(1270,'ah',K),ci(1294,'fs',K))}${r(on(1138,'al'),ci(1174,'ac',K),ci(1198,'ar',K),on(1234,'vt'),ci(1270,'vm',K),ci(1294,'vb',K),ci(1342,'dots',K))}</section>
 <section>${r(b(15,'Fill'),ci(1309.5,'four',K),ci(1342,'add',K))}${r([1142,16,'','sw'],t(1166,42,'000000'),t(1239,28,'100%'),ci(1310,'eye',K),ci(1342,'minus',K))}</section>
 <section>${r([1142,35,tx(35,'Stroke','color:#808080;font-weight:500')],ci(1342,'add','#777'))}</section><div style="padding-top:8px">${r(ci(1342,'add','#777'))}</div>`});

// ---------- canvas ----------
// Label placed on the canvas by left edge x, baseline b, size z (page coordinates).
define('canvas-label',':host{position:absolute;line-height:30px;color:#000;font-family:Inter,sans-serif}',el=>{
 const g=a=>+el.getAttribute(a);el.style.cssText=`left:${g('x')-241}px;top:${g('b')-119-15-g('z')*.3637}px;font-size:${g('z')}px`;
 return tx(g('w'),el.getAttribute('label'))});
const lab=(x,b,w,t,z=29.4)=>`<canvas-label x="${x}" b="${b}" w="${w}" z="${z}" label="${t}"></canvas-label>`;
const pill=(x,y,w,h)=>`<i class="pill" style="left:${x-241}px;top:${y-119}px;width:${w}px;height:${h}px"></i>`;
define('cell-table',`:host{position:absolute;left:201.5px;top:189px;width:556px;height:229px;display:grid;grid-template-columns:repeat(6,1fr);grid-template-rows:repeat(7,1fr);background:#cbcbcb;font:22px/30px Inter,sans-serif;color:#000}
 div{border-bottom:1px solid #dcdcdc;border-right:1px solid #d0d0d0;padding-left:0;overflow:hidden;line-height:27.4px}div.h{background:#4422fc;border-color:#5b40f5;line-height:28px}`,
 Array.from({length:42},(_,i)=>`<div class="${i<6?'h':''}">${tx(35.5,'cell')}</div>`).join(''));
define('design-canvas',`:host{display:block;flex:1;position:relative;overflow:hidden;background:#f3f3f3}
 .art{position:absolute;left:98px;top:2.5px;width:667px;height:473.5px;background:#fff}
 .side{position:absolute;left:0;top:2px;width:17px;height:474px;display:flex;flex-direction:column}.side i{flex:none;height:32.6px;background:#cbcbcb;border-bottom:1px solid #dcdcdc}
 .pill{position:absolute;background:#d8d8d8;border-radius:16px}.bar{position:absolute;right:5px;top:5px;width:6px;height:180px;border-radius:3px;background:#a8a8a8}
 svg{position:absolute;left:0;top:0}`,
 `<div class="side"><i style="height:193px;background:#d8d8d8;border:0"></i><i style="background:#4422fc"></i><i></i><i></i><i></i><i></i><i></i><i></i><i style="flex:1;background:#2a2223;border:0"></i></div><div class="art"></div>`
 +pill(619,137,379,29)+pill(619,173,379,32)+pill(621,207,379,29.4)+pill(621,242,379,29)+pill(621,274.4,379,29)+pill(354,245.4,156.4,29)+pill(457,555.4,156.4,29)+pill(635,555,157,29)+pill(827,555,157,29)
 +lab(395.5,201,132.5,'Transaksi')+lab(723.2,167,205,'bukti transaksi')+lab(725.5,202,198.5,'jenis transaksi')+lab(711.3,236.5,239,'tanggal transaksi')+lab(713,268,225,'nomor transaksi')+lab(710.8,304,221.3,'status transaksi')
 +lab(387.5,266.7,81.5,'kembali',22)+lab(510,578,41,'edit',22)+lab(684.3,577,64.5,'hapus',22)+lab(866,575,79.7,'tambah',22)+'<cell-table></cell-table>'
 +`<svg width="884" height="601" viewBox="241 119 884 601" fill="none" stroke="#46d91f" stroke-width="5.6" stroke-linecap="round" stroke-linejoin="round">
 <g transform="translate(340,120) scale(.33333)"><path d="M697 80 700 95 712 115 712 133M705 112Q722 98 742 98 750 112 738 130L712 134M797 100Q775 105 765 122 762 136 775 135 795 128 797 110 795 98 785 103M815 90 820 122Q825 95 840 85 850 90 853 124"/>
 <path d="M731 200 732 258M716 228Q710 192 728 188 750 184 749 200 748 212 718 228M762 222Q785 212 792 200 782 188 770 205 760 225 770 238 782 246 806 238M808 200 815 243M812 215Q825 200 838 198 844 215 842 240M884 207Q865 205 862 220 865 235 884 228L886 205 888 260Q884 282 868 280 860 276 855 270"/>
 <path d="M672 478 677 538Q700 530 707 515 702 505 680 512M725 522Q745 510 742 498 728 496 724 520 725 540 740 542 750 540 755 535M763 483 770 535M778 500Q775 530 785 532 800 520 805 505L812 530M815 500 822 535Q828 510 836 508L842 532Q848 510 855 512L862 528 870 518"/>
 <path d="M927 471 912 474 915 492 912 540Q900 548 897 536 898 510 925 505M915 490 922 515M936 495 945 535M925 484 937 478M952 468 955 510 967 553M962 520Q978 512 985 520 985 545 964 548M1017 498Q1000 500 997 522 1005 530 1018 500L1023 525M1035 510Q1035 532 1045 525 1060 505 1062 490L1060 550Q1050 575 1040 562M1095 492Q1078 500 1075 518 1085 525 1098 498L1105 520M1105 490 1115 520Q1112 495 1131 488"/></g>
 <g transform="translate(940,165) scale(.33333)"><path d="M56 50 60 78 76 122 75 62M56 50Q70 42 84 46 88 68 62 88M104 85Q128 80 130 64 112 58 104 80 108 105 140 96M142 64 150 100Q152 78 165 65L175 88 190 113 188 100 205 75M203 38 204 108Q198 115 190 113M205 75 220 100M262 62Q240 68 236 92 246 98 262 66L270 110 298 152M280 62 286 118M280 60Q300 52 305 68 300 92 266 104M338 74Q315 82 314 102 325 108 342 82L350 106 370 112M358 54 366 112M346 75 398 68M420 72Q395 82 392 104 405 106 424 76L434 106M437 74 444 104Q450 84 470 70L466 90 480 113"/>
 <path d="M88 346Q66 340 66 352 68 368 96 378 108 392 94 402L66 408 42 406 40 398M112 362Q108 398 124 396 138 380 142 358L146 394M190 332Q202 360 204 385 190 405 176 400 172 372 200 362M258 364Q232 372 230 394 246 396 260 368L266 394 286 410M272 345 284 412Q285 380 298 376L306 400 322 406M392 322 400 402M398 362Q368 368 366 392 380 402 400 384M416 370 420 398M410 345 422 345M433 312 441 382M441 358Q460 350 470 356L468 380 441 382"/></g></svg><div class="bar"></div>`);

// ---------- screen sharing overlays ----------
define('annotation-tool',`:host{display:block;flex:none;width:55px;font:700 11px "Open Sans",sans-serif;color:#fff;position:relative}:host([wide]){width:70px}:host([on]) .l{color:#f8a01c}
 div{display:flex;justify-content:center;align-items:center}.i{height:22px;margin:5px 0 0 -1px}.l{height:11px;margin-left:-.5px}.v{position:absolute;right:7px;top:8px}`,el=>`<div class="i">${ic(el.getAttribute('icon'))}</div><div class="l">${tx(el.getAttribute('w'),el.getAttribute('label'))}</div>${el.hasAttribute('menu')?`<span class="v">${ic('chev')}</span>`:''}`);
define('annotation-bar',`:host{position:absolute;left:312px;top:21px;box-sizing:border-box;width:723px;height:43px;background:#393b3b;border-radius:4px;display:flex;padding-left:8px}.x{margin:8px 0 0 18px}`,
 [['mouse',29,'Mouse'],['select',26,'Select'],['bigt',19,'Text'],['draw',23,'Draw','on'],['stamp',28,'Stamp'],['spot',42,'Spotlight','wide'],['eraser',27,'Eraser'],['format',32,'Format'],['undo',23,'Undo'],['redo',22,'Redo'],['clear',23,'Clear'],['save',20,'Save','menu']].map(([i,w,l,a=''])=>`<annotation-tool icon="${i}" w="${w}" label="${l}" ${a}></annotation-tool>`).join('')+`<span class="x">${ic('closer')}</span>`);
define('share-hint',`:host{position:absolute;left:546px;top:63px;width:255px;height:25px;background:#393b3b;border-radius:0 0 6px 6px;font:700 12px "Open Sans",sans-serif;color:#fff}`,strip(546,[ci(570,'who'),[586,191,tx(191,'Who can see what you share here?')]]));
define('share-banner',`:host{position:absolute;left:523px;top:645px;width:338px;height:23px;display:flex;font:700 12px "Open Sans",sans-serif}.g{width:241px;background:#23d959;color:#10391b;border-radius:6px 0 0 0}.r{width:97px;background:#e02828;color:#fff;border-radius:0 6px 0 0}.q{height:8px;background:#d8fbff;margin-bottom:5px}`,
 `<div class="g">${strip(523,[ci(541,'green'),[579,125,tx(125,'You are screen sharing')],ci(748,'shield')])}</div><div class="r">${strip(764,[[772,8,'','q'],[786,57,tx(57,'Stop Share')]])}</div>`);
define('meeting-bar',`:host{position:absolute;left:159px;top:667px;box-sizing:border-box;width:1066px;height:53px;background:#232527;border:1px solid #0f1011;border-radius:10px 10px 0 0;font:12px "Open Sans",sans-serif;color:#b4b7b9}.a{height:32px;padding-top:6px}.b{height:16px}.u{padding-bottom:8px}.n{padding-bottom:13px}`,()=>{
 const m=(cx)=>[cx-4,8,ic('zchev'),'u'];
 return `<div class="a">${strip(160,[ci(205,'mic'),m(233),ci(293,'video'),m(325),ci(377,'sec'),ci(481,'people'),[498,7,tx(6,'3'),'n'],m(533),ci(594,'chat'),m(627),ci(675,'polls'),ci(753,'newshare'),m(783),ci(841,'pause'),ci(923,'pencil'),ci(1019,'remote'),ci(1115,'apps'),ci(1187,'more')])}</div>
 <div class="b">${strip(160,[[191,28,'Mute'],[264,59,'Start Video'],[356,43,'Security'],[450,62,'Participants'],[582,24,'Chat'],[662,25,'Polls'],[724,57,'New Share'],[809,64,'Pause Share'],[898,49,'Annotate'],[977,84,'Remote Control'],[1102,27,'Apps'],[1173,28,'More']].map(([x,w,t])=>[x,w,tx(w,t,t==='New Share'?'color:#23d959':'')]))}</div>`});
define('help-button',`:host{position:absolute;left:1306px;top:660px;width:36px;height:36px;border-radius:50%;background:#1e1e1e;color:#fff;display:flex;align-items:center;justify-content:center;font:300 18px Inter,sans-serif}`,'?');

// ---------- taskbar ----------
define('task-bar',`:host{display:block;height:48px;box-sizing:border-box;flex:none;border-top:1px solid #bcc6d2;background:linear-gradient(90deg,#e3eff8,#d7e6fa 14%,#d4e0f8 24%,#d9dcf4 36%,#d6dff7 55%,#dfe4f8 75%,#e1edf9);font:12px "Open Sans",sans-serif;color:#1b1b1b;position:relative}
 .p{height:30px;border-radius:15px;background:#f3f6fd}.z{height:39px;border-radius:4px;background:#f0f3fc;border:1px solid #e0e5f2}.s>.k{flex-direction:column;align-items:flex-end;justify-content:center;line-height:16px}.n{height:16px;border-radius:50%;background:#0a63bd;color:#fff;font-size:10px}
 .run{position:absolute;bottom:5px;height:3px;width:6px;border-radius:2px;background:#7d838e}`,
 strip(0,[[11,24,ic('weather')],ci(410.5,'win'),[437,98,strip(437,[ci(466,'tsearch'),[478,36,tx(36,'Search')]]),'p'],ci(560.5,'task'),ci(604,'teams'),ci(649,'folder'),ci(693,'edge'),ci(736.5,'store'),ci(781,'chrome'),[808,34,ic('chromem')],[852,34,ic('chromes')],ci(913,'note'),[938,38,ic('zoom'),'c z'],ci(1132,'up'),ci(1160,'tmic'),ci(1192,'wifi'),ci(1215,'spk'),ci(1240,'bat'),[1264,58,tx(47,'10:08 PM')+tx(58,'11/22/2022'),'k'],[1330,16,'3','c n']])
 +'<i class="run" style="left:822px"></i><i class="run" style="left:866px"></i><i class="run" style="left:910px"></i><i class="run" style="left:949px;width:16px;background:#0a76d6"></i>');

define('desktop-screen',`:host{display:flex;flex-direction:column;width:1366px;height:768px;position:relative;overflow:hidden}main{display:flex;height:601px;flex:none}`,
 '<browser-tabs></browser-tabs><browser-bar></browser-bar><figma-toolbar></figma-toolbar><main><layers-panel></layers-panel><design-canvas></design-canvas><design-panel></design-panel></main><task-bar></task-bar><annotation-bar></annotation-bar><share-hint></share-hint><share-banner></share-banner><meeting-bar></meeting-bar><help-button></help-button>');
pending.forEach(e=>e.fit());pending.forEach(e=>e.apply());
</script></body></html>
